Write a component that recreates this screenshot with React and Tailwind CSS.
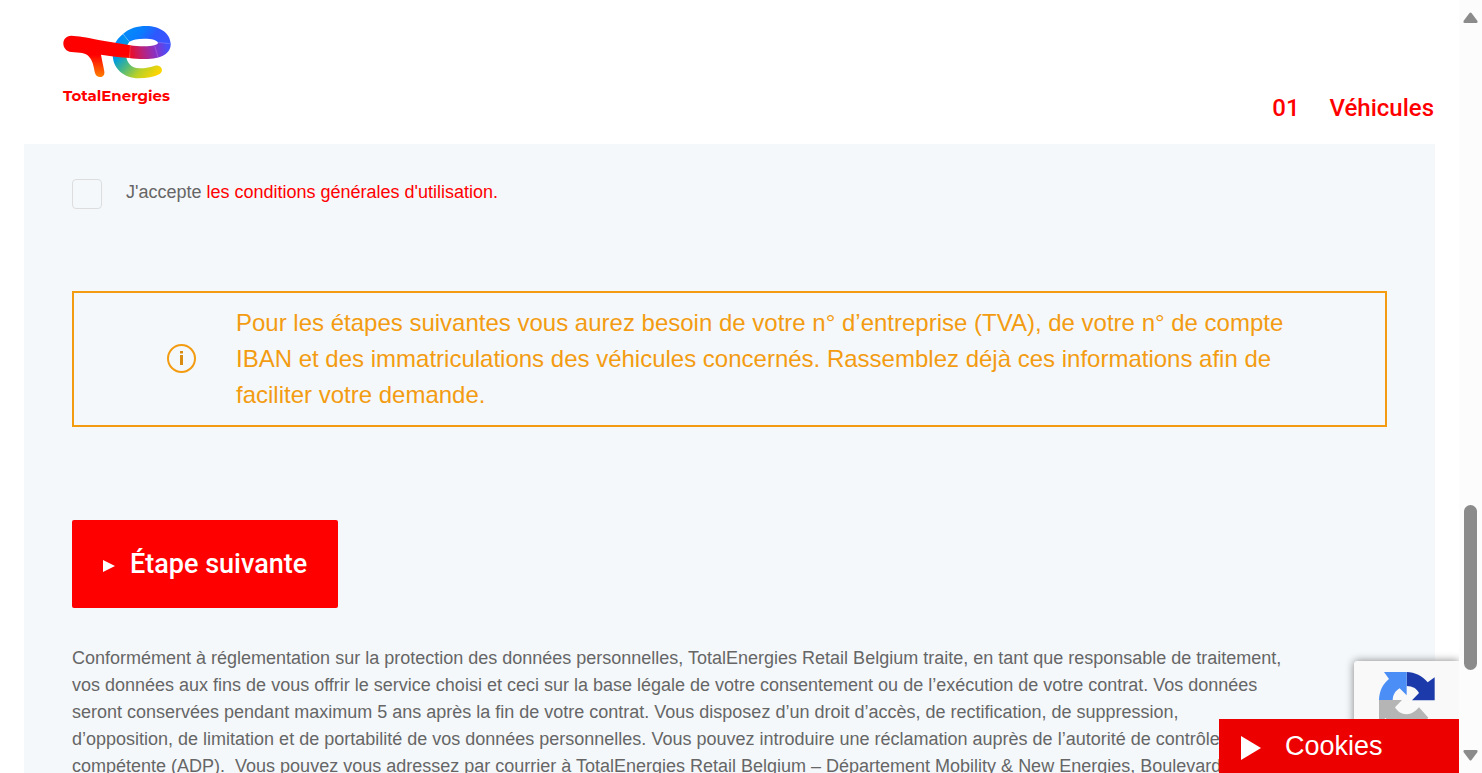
function Logo() {
  return (
    <a href="#accueil" aria-label="TotalEnergies" className="flex flex-col items-start text-[#ff0000] font-['Montserrat','Inter',sans-serif]">
      <svg viewBox="36 30 330 162" className="h-[54px] w-[110px]" aria-hidden="true">
        <defs>
          <linearGradient id="lg-top" x1="0" x2="1" y1="0" y2="0.3">
            <stop offset="0" stopColor="#0090f5" />
            <stop offset="0.45" stopColor="#0a7cff" />
            <stop offset="0.75" stopColor="#2e58ff" />
            <stop offset="1" stopColor="#3a55ff" />
          </linearGradient>
          <linearGradient id="lg-left" gradientUnits="userSpaceOnUse" x1="205" y1="65" x2="325" y2="175">
            <stop offset="0" stopColor="#0088ff" />
            <stop offset="0.25" stopColor="#009ddb" />
            <stop offset="0.5" stopColor="#55bb78" />
            <stop offset="0.72" stopColor="#b8d02a" />
            <stop offset="1" stopColor="#ffd500" />
          </linearGradient>
          <linearGradient id="lg-right" gradientUnits="userSpaceOnUse" x1="238" y1="118" x2="352" y2="94">
            <stop offset="0" stopColor="#ee0a20" />
            <stop offset="0.3" stopColor="#c02070" />
            <stop offset="0.7" stopColor="#8434cc" />
            <stop offset="1" stopColor="#4650fa" />
          </linearGradient>
          <linearGradient id="lg-t" gradientUnits="userSpaceOnUse" x1="0" y1="120" x2="0" y2="188">
            <stop offset="0" stopColor="#ff0000" />
            <stop offset="1" stopColor="#ff8200" />
          </linearGradient>
        </defs>
        <path fill="url(#lg-left)" d="M219 57L238 80C229 92 227 103 228 118C229 143 243 160 268 160C288 160 302 156 315 152C333 147 344 167 329 177C312 186 290 190 266 190C220 190 188 160 188 118C188 92 200 72 219 57Z" />
        <path fill="url(#lg-top)" d="M219 57C238 40 262 33 288 33C330 33 362 55 362 88L324 84C323 75 305 71 283 71C262 71 248 74 238 80Z" />
        <path fill="url(#lg-right)" d="M324 82L362 86C363 115 335 132 285 132C265 132 250 131 238 129L240 91C260 94 285 95 300 93C315 91 325 89 324 82Z" />
        <path fill="url(#lg-t)" d="M64 62C85 63 105 66 150 76L241 91L239 129C210 127 180 123 153 119C156 136 160 152 163 170C166 190 139 192 135 174C130 145 124 115 90 113L64 111C32 108 32 62 64 62Z" />
        <path stroke="#fff" strokeOpacity=".35" strokeWidth="1.500" fill="none" d="M219 57L238 80M324 82L360 86M314 92L324 126M241 91L239 128" />
      </svg>
      <span className="mt-[5px] pl-px text-[15px] leading-6 font-bold">TotalEnergies</span>
    </a>
  );
}

function Triangle({ className }) {
  return (
    <svg viewBox="0 0 12 12" className={className} fill="currentColor" preserveAspectRatio="none" aria-hidden="true">
      <path d="M0 0L12 6L0 12Z" />
    </svg>
  );
}

function Header() {
  return (
    <header className="flex h-36 justify-between bg-white pt-[25px] pr-[25px] pl-[62px]">
      <Logo />
      <h2 className="mt-[65px] flex gap-[30px] text-2xl leading-9 font-medium text-[#ff0000] font-['Roboto',sans-serif]">
        <span>01</span>
        <span>Véhicules</span>
      </h2>
    </header>
  );
}

function Scrollbar() {
  return (
    <div className="flex w-[23px] shrink-0 flex-col items-center bg-[#fcfcfc] text-[#8b8b8b]" aria-hidden="true">
      <svg viewBox="0 0 15 11" className="mt-3 h-[11px] w-[15px]" fill="currentColor">
        <path d="M6.500 1Q7.500 0 8.500 1L14.500 9Q15 11 13.500 11H1.500Q0 11 .5 9Z" />
      </svg>
      <div className="flex-[482]" />
      <div className="w-[13px] flex-[165] rounded-full bg-[#8b8b8b]" />
      <div className="flex-[80]" />
      <svg viewBox="0 0 15 11" className="mb-3 h-[11px] w-[15px] rotate-180" fill="currentColor">
        <path d="M6.500 1Q7.500 0 8.500 1L14.500 9Q15 11 13.500 11H1.500Q0 11 .5 9Z" />
      </svg>
    </div>
  );
}

function Recaptcha() {
  return (
    <div className="absolute right-0 bottom-[22px] h-[90px] w-[105px] rounded-l-[3px] bg-[#f9f9f9] shadow-[0_0_8px_#808080]">
      <svg viewBox="0 0 168 168" className="mt-[11px] ml-[25px] size-14" role="img" aria-label="reCAPTCHA">
        <path fill="#1c3aa9" d="M83 0C108 1 130 11 146 31L167 16V85H99L120 63C112 49 102 43 83 42Z" />
        <path fill="#4a8ef6" d="M83 0V70L62 49C49 57 42 67 41 84H0C1 58 11 36 30 21L15 0Z" />
        <path fill="#b5b5b5" d="M0 84H69L48 106C57 120 67 126 83 127C97 126 106 121 120 106L148 137C132 157 110 167 83 168C56 167 35 156 20 138L0 153Z" />
      </svg>
    </div>
  );
}

export default function App() {
  return (
    <div className="flex h-screen overflow-hidden bg-white font-['Liberation_Sans',Arial,sans-serif]">
      <div className="relative min-w-0 flex-1 overflow-hidden">
        <Header />
        <main className="mx-6 bg-[#f4f8fb] px-12 pt-[35px] text-lg leading-[27px] text-[#666666]">
          <div className="flex items-start gap-6">
            <input
              id="conditions"
              type="checkbox"
              className="size-[30px] shrink-0 appearance-none rounded border border-[#dddddd] checked:bg-[#ff0000]"
            />
            <label htmlFor="conditions">
              J'accepte <a href="#conditions-generales" className="text-[#ff0000]">les conditions générales d'utilisation.</a>
            </label>
          </div>

          <div className="mt-[82px] flex items-center border-2 border-[#f39c12] py-3 pr-20 pl-[93px] text-2xl leading-9 text-[#f39c12]">
            <svg viewBox="0 0 30 30" className="mr-[39px] size-[30px] shrink-0" fill="none" aria-hidden="true">
              <circle cx="14.500" cy="14.500" r="13.500" stroke="#f39c12" strokeWidth="2" />
              <path fill="#d98c12" d="M13 7h3v2.500h-3zM13 11h3v10h-3z" />
            </svg>
            <p>
              Pour les étapes suivantes vous aurez besoin de votre n° d’entreprise (TVA), de votre n° de compte IBAN et des immatriculations des véhicules concernés. Rassemblez déjà ces informations afin de faciliter votre demande.
            </p>
          </div>

          <button
            type="button"
            className="mt-[93px] flex h-[88px] items-center gap-[15px] rounded-xs bg-[#ff0000] px-[31px] text-[27px] leading-9 font-medium text-white font-['Roboto',sans-serif]"
          >
            <Triangle className="mt-1 h-3 w-3" />
            Étape suivante
          </button>

          <p className="mt-[37px] max-w-[1210px]">
            Conformément à réglementation sur la protection des données personnelles, TotalEnergies Retail Belgium traite, en tant que responsable de traitement, vos données aux fins de vous offrir le service choisi et ceci sur la base légale de votre consentement ou de l’exécution de votre contrat. Vos données seront conservées pendant maximum 5 ans après la fin de votre contrat. Vous disposez d’un droit d’accès, de rectification, de suppression, d’opposition, de limitation et de portabilité de vos données personnelles. Vous pouvez introduire une réclamation auprès de l’autorité de contrôle compétente (ADP).&nbsp; Vous pouvez vous adressez par courrier à TotalEnergies Retail Belgium – Département Mobility &amp; New Energies, Boulevard
          </p>
        </main>
        <Recaptcha />
        <button
          type="button"
          className="absolute right-0 bottom-0 flex h-[54px] w-60 items-center gap-6 bg-[#ed0000] pl-[22px] text-[27px] leading-9 text-white"
        >
          <Triangle className="mt-1 h-6 w-5" />
          Cookies
        </button>
      </div>
      <Scrollbar />
    </div>
  );
}
